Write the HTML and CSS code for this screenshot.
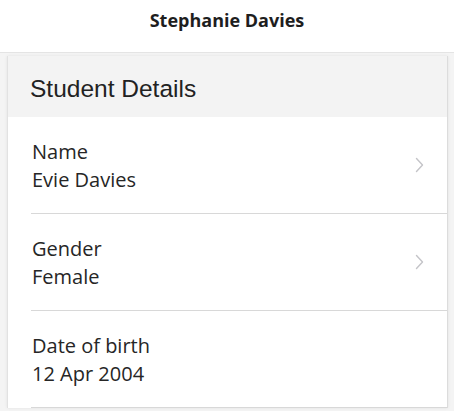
FILE: index.html
```html
<!DOCTYPE html>
<html lang="en">
<head>
  <meta charset="UTF-8" />
  <meta name="viewport" content="width=device-width, initial-scale=1.0"/>
  <title>Student Details</title>
  <link rel="stylesheet" href="styles.css">
</head>
<body>

  <header class="topbar">
    <h1>Stephanie Davies</h1>
  </header>

  <div class="content">
    <div class="card">
      <div class="card-header">Student Details</div>

      <div class="row">
        <div class="row-text">
          <div>Name</div>
          <div>Evie Davies</div>
        </div>
        <svg class="chevron" width="9" height="16" viewBox="0 0 9 16">
          <path d="M1.5 1.5 L7.5 8 L1.5 14.5" fill="none" stroke="#c4c4c8" stroke-width="1.4" stroke-linecap="round" stroke-linejoin="round"/>
        </svg>
      </div>

      <div class="row">
        <div class="row-text">
          <div>Gender</div>
          <div>Female</div>
        </div>
        <svg class="chevron" width="9" height="16" viewBox="0 0 9 16">
          <path d="M1.5 1.5 L7.5 8 L1.5 14.5" fill="none" stroke="#c4c4c8" stroke-width="1.4" stroke-linecap="round" stroke-linejoin="round"/>
        </svg>
      </div>

      <div class="row">
        <div class="row-text">
          <div>Date of birth</div>
          <div>12 Apr 2004</div>
        </div>
      </div>
    </div>
  </div>

</body>
</html>
```

FILE: styles.css
```css
body {
  font-family: "Open Sans", sans-serif;
  margin: 0;
  background-color: #f4f4f4;
  color: #262626;
  height: 411px;
  overflow: hidden;
}

.topbar {
  height: 40px;
  padding-bottom: 12px;
  background-color: white;
  border-bottom: 1px solid #e4e4e4;
  display: flex;
  align-items: center;
  justify-content: center;
}

.topbar h1 {
  margin: 0;
  font-size: 18px;
  font-weight: 700;
  color: #1e1e1e;
}

.content {
  padding: 3px 6px 0 7px;
}

.card {
  background-color: white;
  border-left: 1px solid #e2e2e2;
  border-right: 1px solid #dcdcdc;
  box-shadow: 0 0 3px rgba(0,0,0,0.08);
}

.card-header {
  height: 57px;
  padding-top: 4px;
  background-color: #f3f3f3;
  padding-left: 22px;
  display: flex;
  align-items: center;
  font-family: "Liberation Sans", Arial, sans-serif;
  font-size: 24.5px;
  color: #222;
}

.row {
  height: 96px;
  margin-left: 23px;
  padding-right: 23px;
  border-bottom: 1px solid #d8d8d8;
  display: flex;
  align-items: center;
  justify-content: space-between;
}

.row-text {
  padding-left: 1px;
  padding-top: 2px;
  font-size: 20px;
  line-height: 28px;
}
```
